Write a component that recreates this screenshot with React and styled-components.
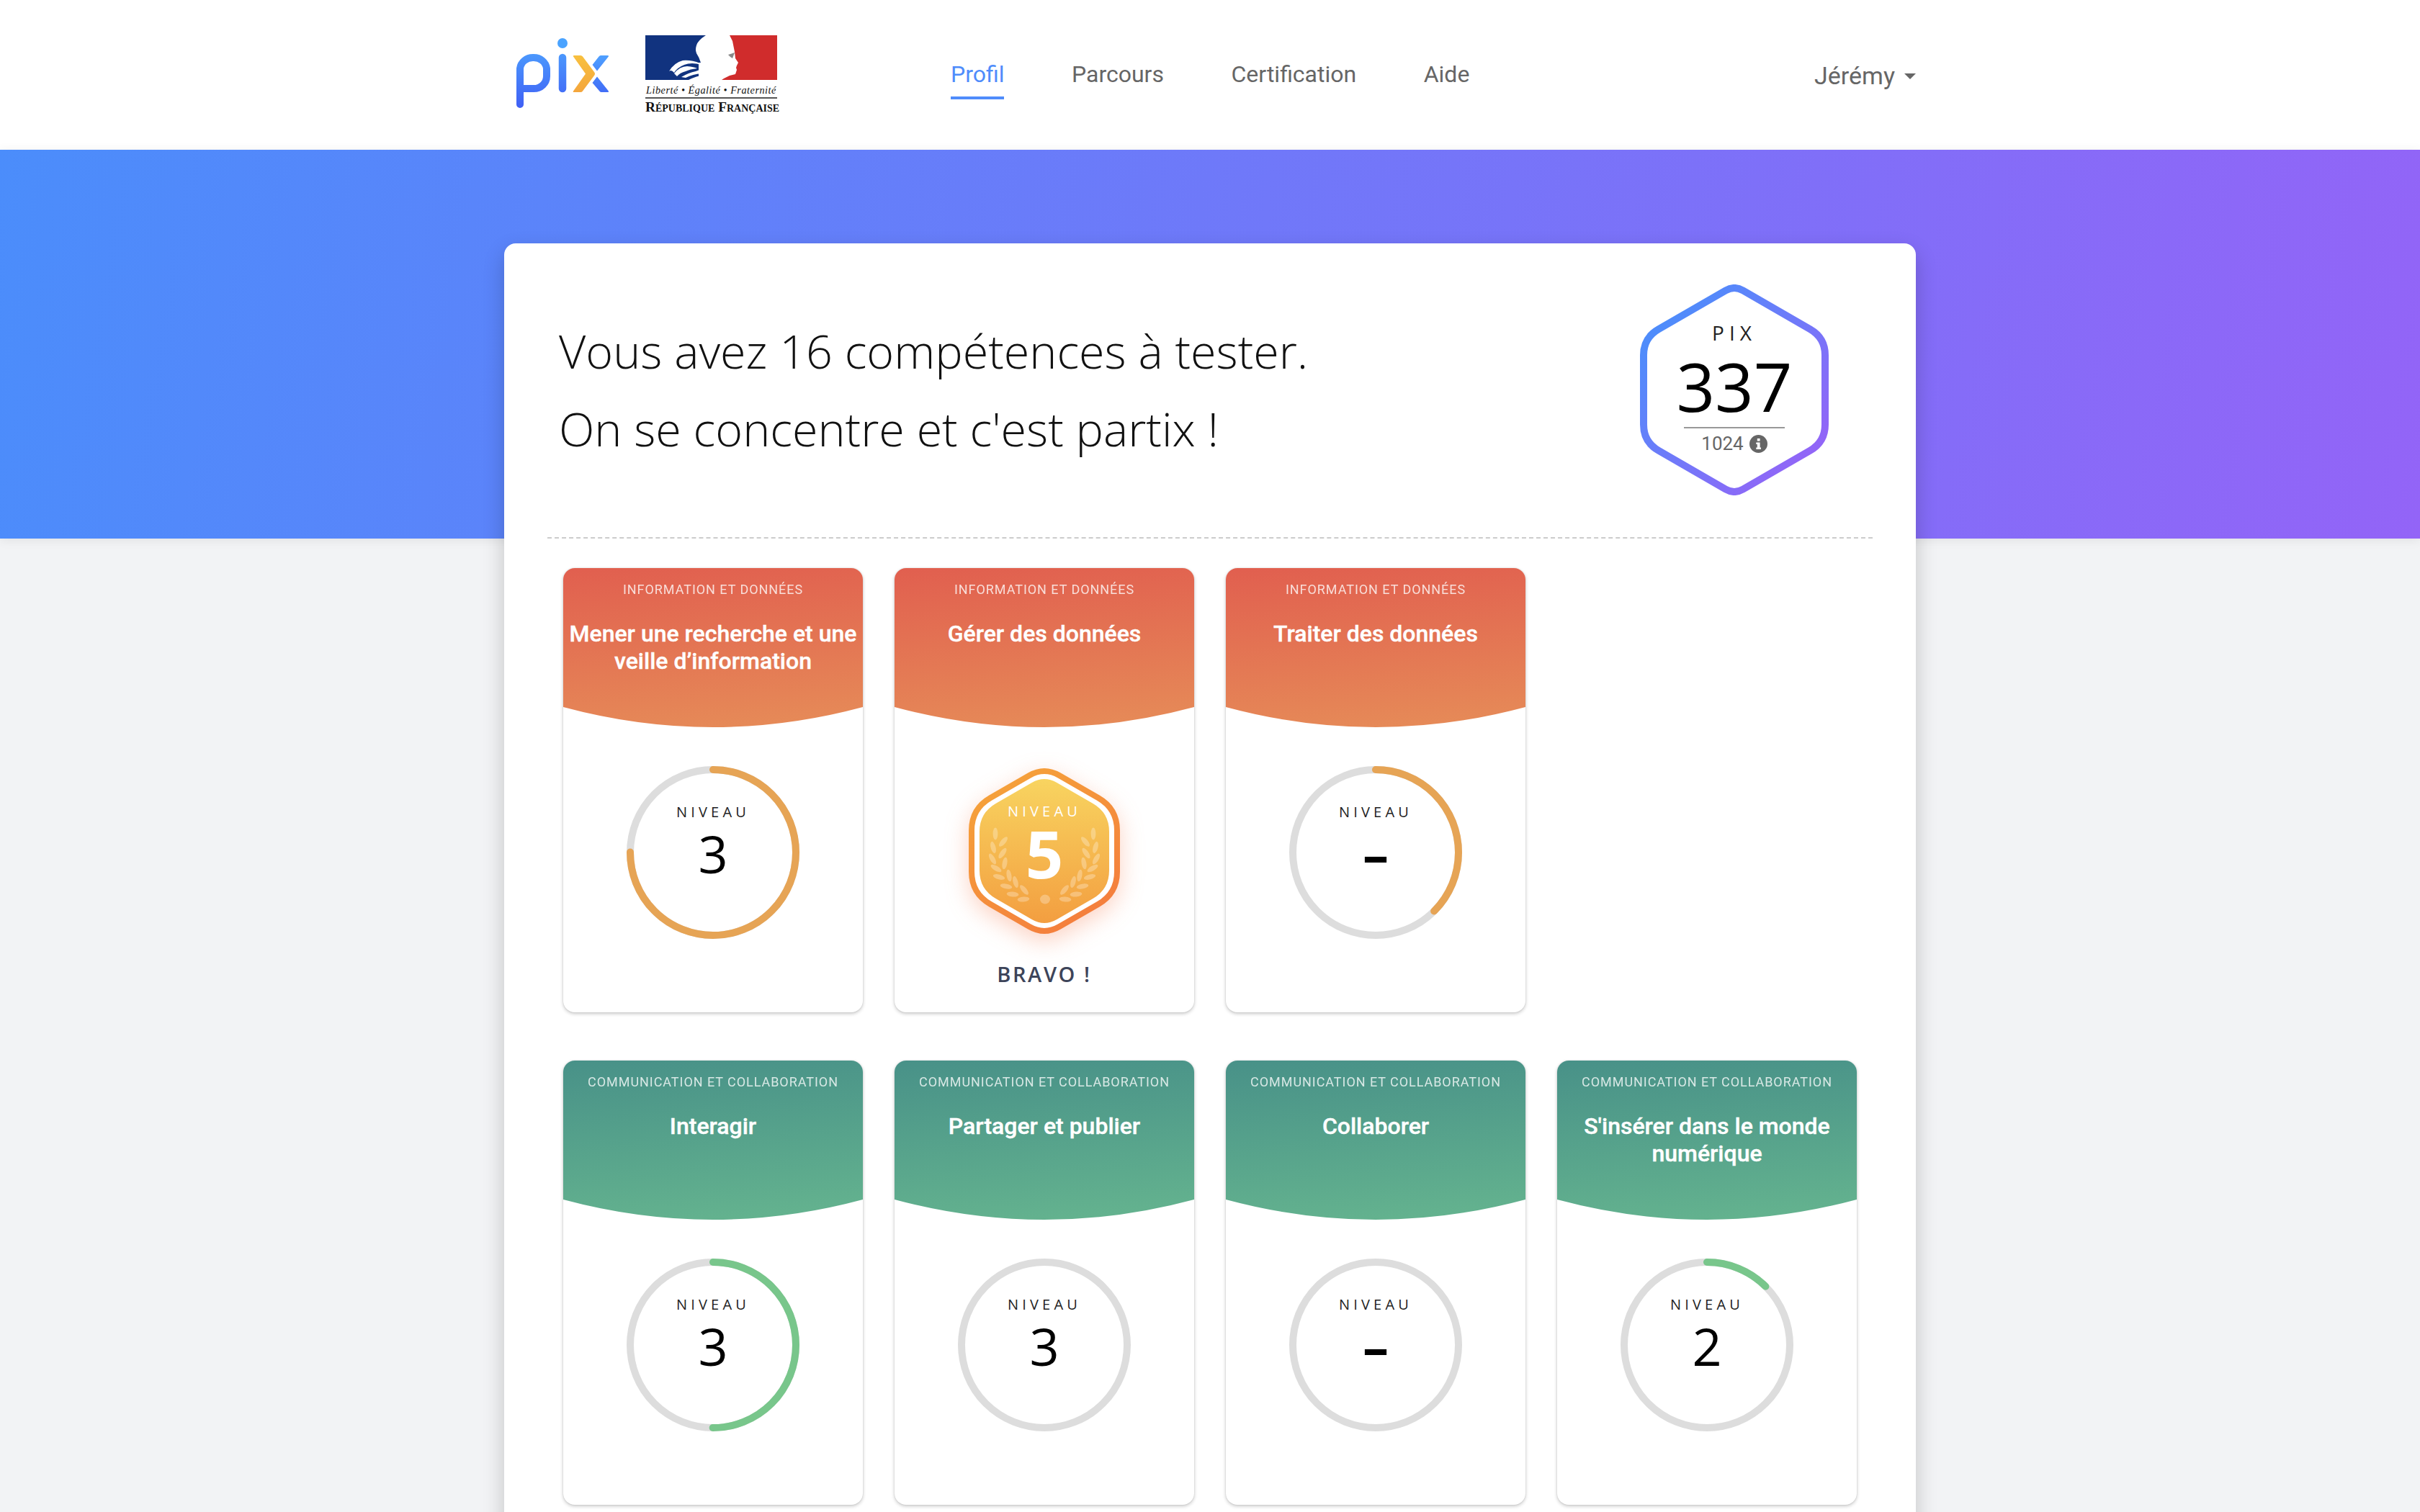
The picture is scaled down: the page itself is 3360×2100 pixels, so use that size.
import React from 'react';
import styled, { createGlobalStyle } from 'styled-components';

const Global = createGlobalStyle`
  html, body { margin: 0; padding: 0; width: 3360px; height: 2100px; overflow: hidden; background: #f2f3f5; }
  #root { width: 3360px; height: 2100px; overflow: hidden; font-family: "Roboto", "Liberation Sans", sans-serif; }
`;

const hexPath = (cx, cy, hw, hh, dTop, dSide) => {
  const rise = hw * Math.tan(Math.PI / 6);
  const pts = [
    [cx, cy - hh, dTop],
    [cx + hw, cy - hh + rise, dSide],
    [cx + hw, cy + hh - rise, dSide],
    [cx, cy + hh, dTop],
    [cx - hw, cy + hh - rise, dSide],
    [cx - hw, cy - hh + rise, dSide],
  ];
  const towards = (a, b, d) => {
    const len = Math.hypot(b[0] - a[0], b[1] - a[1]);
    return [a[0] + ((b[0] - a[0]) * d) / len, a[1] + ((b[1] - a[1]) * d) / len];
  };
  let out = '';
  pts.forEach((p, i) => {
    const prev = pts[(i + 5) % 6];
    const next = pts[(i + 1) % 6];
    const a = towards(p, prev, p[2]);
    const b = towards(p, next, p[2]);
    out += `${i === 0 ? 'M' : 'L'}${a[0].toFixed(2)} ${a[1].toFixed(2)} Q${p[0]} ${p[1]} ${b[0].toFixed(2)} ${b[1].toFixed(2)} `;
  });
  return out + 'Z';
};

const Page = styled.div`
  width: 3360px;
`;

const TopBar = styled.header`
  height: 208px;
  background: #fff;
`;

const TopBarInner = styled.div`
  width: 1960px;
  height: 100%;
  margin: 0 auto;
  display: flex;
  align-items: center;
  box-sizing: border-box;
  padding-left: 17px;
`;

const Logos = styled.div`
  display: flex;
  align-items: center;
  gap: 50px;
  width: 603px;
  margin-top: -2px;
`;

const PixMark = styled.svg`
  margin-top: -3px;
`;

const RfBlock = styled.div`
  width: 183px;
  display: flex;
  flex-direction: column;
  align-items: stretch;
`;

const RfMotto = styled.div`
  font-family: "Liberation Serif", serif;
  font-style: italic;
  font-size: 14.2px;
  line-height: 16px;
  margin-top: 6px;
  color: #111;
  white-space: nowrap;
  text-align: center;
  letter-spacing: 0.55px;
`;

const RfRule = styled.div`
  height: 2px;
  background: #555;
  margin-top: 2px;
`;

const RfName = styled.div`
  font-family: "Liberation Serif", serif;
  font-weight: 700;
  font-size: 19.3px;
  line-height: 18px;
  margin-top: 3px;
  font-variant: small-caps;
  color: #111;
  white-space: nowrap;
  text-align: center;
`;

const Nav = styled.nav`
  display: flex;
  gap: 93.5px;
  flex: 1;
  margin-top: -10px;
`;

const NavLink = styled.a`
  font-size: 32px;
  line-height: 40px;
  color: ${(p) => (p.$active ? '#4f8cfb' : '#666')};
  padding: 6px 0 11px;
  border-bottom: 4px solid ${(p) => (p.$active ? '#4f8cfb' : 'transparent')};
  margin-top: 16px;
`;

const UserMenu = styled.div`
  display: flex;
  align-items: center;
  gap: 13px;
  font-size: 34px;
  color: #666;
  margin-top: 2px;
`;

const Caret = styled.span`
  width: 0;
  height: 0;
  border-left: 8px solid transparent;
  border-right: 8px solid transparent;
  border-top: 8px solid #666;
  margin-top: 2px;
`;

const Band = styled.div`
  position: relative;
  height: 540px;
  background: linear-gradient(100deg, #4b8dfb 0%, #9364f7 100%);
  box-shadow: 0 2px 14px rgba(0, 0, 0, 0.08);
`;

const MainCard = styled.main`
  position: relative;
  width: 1960px;
  height: 2000px;
  margin: -410px auto 0;
  background: #fff;
  border-radius: 16px 16px 0 0;
  box-shadow: 0 12px 30px rgba(0, 0, 0, 0.2);
  box-sizing: border-box;
  padding: 0 60px;
`;

const Intro = styled.section`
  height: 410px;
  border-bottom: 2px dashed #ccc;
  box-sizing: border-box;
  display: flex;
  justify-content: space-between;
  padding: 57px 61px 0 16px;
`;

const IntroText = styled.div`
  font-family: "Open Sans", sans-serif;
  font-weight: 300;
  font-size: 64.6px;
  line-height: 108px;
  color: #111;
  padding-top: 38px;
`;

const ScoreStack = styled.div`
  display: grid;
  width: 262px;
  height: 293px;
  & > * { grid-area: 1 / 1; }
`;

const ScoreContent = styled.div`
  display: flex;
  flex-direction: column;
  align-items: center;
  padding-top: 51px;
`;

const ScoreLabel = styled.div`
  font-family: "Open Sans", sans-serif;
  font-size: 28px;
  line-height: 32px;
  letter-spacing: 7px;
  color: #222;
`;

const ScoreValue = styled.div`
  font-family: "Open Sans", sans-serif;
  font-size: 94px;
  line-height: 112px;
  color: #000;
  margin-top: 2px;
`;

const ScoreRule = styled.div`
  width: 140px;
  height: 2px;
  background: #999;
  margin-top: 1px;
`;

const ScoreMax = styled.div`
  display: flex;
  align-items: center;
  gap: 8px;
  font-size: 26px;
  line-height: 40px;
  color: #666;
  margin-top: 1px;
`;

const Grid = styled.div`
  display: grid;
  grid-template-columns: repeat(4, 416px);
  column-gap: 44px;
  row-gap: 67px;
  padding: 41px 22px 0;
`;

const Card = styled.article`
  height: 617px;
  border-radius: 16px;
  background: #fff;
  overflow: hidden;
  box-shadow: 0 2px 5px rgba(0, 0, 0, 0.22), 0 0 2px rgba(0, 0, 0, 0.12);
  display: flex;
  flex-direction: column;
  align-items: center;
`;

const CardHead = styled.div`
  width: 100%;
  height: 221px;
  flex: none;
  box-sizing: border-box;
  padding-top: 18px;
  text-align: center;
  color: #fff;
  background: ${(p) =>
    p.$tone === 'orange'
      ? 'linear-gradient(176deg, #e15f4f 0%, #e68c58 100%)'
      : 'linear-gradient(176deg, #489188 0%, #65b48f 100%)'};
  clip-path: path('M0 0 H416 V193 Q208 249 0 193 Z');
`;

const Tag = styled.div`
  font-size: 18px;
  line-height: 24px;
  letter-spacing: 0.95px;
  text-transform: uppercase;
  opacity: 0.78;
  white-space: nowrap;
`;

const Title = styled.h3`
  margin: 30px 0 0;
  font-size: 32px;
  font-weight: 500;
  line-height: 38px;
  padding: 0 6px;
  -webkit-text-stroke: 0.4px #fff;
`;

const CardBody = styled.div`
  flex: 1;
  display: flex;
  flex-direction: column;
  align-items: center;
  padding-top: 54px;
`;

const Dial = styled.div`
  display: grid;
  width: 240px;
  height: 240px;
  & > * { grid-area: 1 / 1; }
`;

const DialInner = styled.div`
  display: flex;
  flex-direction: column;
  align-items: center;
  padding-top: 51px;
`;

const LevelLabel = styled.div`
  font-family: "Open Sans", sans-serif;
  font-size: 20px;
  line-height: 26px;
  letter-spacing: 5.2px;
  color: ${(p) => p.$color || '#222'};
`;

const LevelValue = styled.div`
  font-family: "Open Sans", sans-serif;
  font-size: 72px;
  font-weight: ${(p) => (p.$empty ? 700 : 400)};
  line-height: 84px;
  color: #000;
  margin-top: 2px;
`;

const BadgeStack = styled.div`
  display: grid;
  width: 210px;
  height: 230px;
  margin-top: 3px;
  & > * { grid-area: 1 / 1; }
`;

const BadgeArt = styled.svg`
  overflow: visible;
  filter: drop-shadow(0 10px 16px rgba(244, 110, 60, 0.3));
`;

const BadgeInner = styled.div`
  position: relative;
  display: flex;
  flex-direction: column;
  align-items: center;
  padding-top: 47px;
`;

const BadgeValue = styled.div`
  font-family: "Open Sans", sans-serif;
  font-weight: 700;
  font-size: 92px;
  line-height: 92px;
  color: #fff;
  margin-top: -1px;
`;

const Bravo = styled.div`
  font-family: "Open Sans", sans-serif;
  font-weight: 600;
  font-size: 29px;
  line-height: 36px;
  letter-spacing: 2.6px;
  color: #3d4459;
  margin-top: 38px;
`;

const Spacer = styled.div``;

const PixLogo = () => (
  <PixMark width="129" height="97" viewBox="0 0 129 97" fill="none">
    <defs>
      <linearGradient id="pixBlue" gradientUnits="userSpaceOnUse" x1="0" y1="0" x2="0" y2="97">
        <stop offset="0" stopColor="#4fa8ff" />
        <stop offset="1" stopColor="#3f5ff5" />
      </linearGradient>
      <linearGradient id="pixYellow" gradientUnits="userSpaceOnUse" x1="0" y1="24" x2="0" y2="75">
        <stop offset="0" stopColor="#f8c03f" />
        <stop offset="1" stopColor="#f4a63c" />
      </linearGradient>
      <linearGradient id="pixBlue2" gradientUnits="userSpaceOnUse" x1="0" y1="24" x2="0" y2="76">
        <stop offset="0" stopColor="#4fa0ff" />
        <stop offset="1" stopColor="#416cf6" />
      </linearGradient>
    </defs>
    <path d="M5 92 V42 A18 17 0 0 1 23 27 H24 A18 17 0 0 1 42 42 V53 A18 17 0 0 1 24 70 H6" stroke="url(#pixBlue)" strokeWidth="10" strokeLinecap="round" strokeLinejoin="round" />
    <circle cx="64" cy="7" r="7" fill="#4aa3ff" />
    <path d="M64 27 V70" stroke="url(#pixBlue)" strokeWidth="10.5" strokeLinecap="round" />
    <path d="M80 24 H89 Q91 24 92 25.5 L108 47 Q110 49.5 108 52 L92 73.5 Q91 75 89 75 H80 Q78 75 79 73.5 L96 49.5 L79 25.5 Q78 24 80 24 Z" fill="url(#pixYellow)" />
    <path d="M117 24 H126.5 Q129 24 127.5 26 L112 45.5 L105.5 37 L114.5 25.5 Q115.5 24 117 24 Z" fill="url(#pixBlue2)" />
    <path d="M112 53.5 L127.5 73 Q129 75 126.5 75 H118 Q116.5 75 115.5 73.8 L105.5 62 Z" fill="url(#pixBlue2)" />
  </PixMark>
);

const Marianne = () => (
  <svg width="183" height="62" viewBox="0 0 183 62">
    <rect width="183" height="62" fill="#fff" />
    <path d="M0 0 H84 Q73 7 71 14 Q69 20 71 25 Q75 31 77 38 V62 H0 Z" fill="#11337f" />
    <path d="M33 50 Q40 38 52 35 Q64 34 76 39 L78 41 Q64 37 54 41 Q44 45 40 52 Q36 47 33 50 Z" fill="#fff" />
    <path d="M40 53 Q48 43 58 43 Q68 44 72 46 Q62 47 56 50 Q48 52 44 57 Z" fill="#fff" />
    <path d="M50 58 Q60 52 70 50 L78 47 V53 Q66 54 56 59 Z" fill="#fff" />
    <path d="M60 62 Q70 57 84 54 V62 Z" fill="#fff" />
    <rect x="74" y="38" width="10" height="24" fill="#fff" />
    <path d="M117 0 H183 V62 H106 L109 60 L117 56 L125 54 L127 48 L126 45 L127 42 L129 38 L125 32 L124 23 L122 13 L121 8 Z" fill="#d02c2c" />
    <path d="M115 27 L124 24 L121 32 L118 30 Z" fill="#888" />
  </svg>
);

const InfoIcon = () => (
  <svg width="25" height="25" viewBox="0 0 25 25">
    <circle cx="12.5" cy="12.5" r="12.5" fill="#666" />
    <rect x="10.8" y="5" width="3.8" height="3.6" fill="#fff" />
    <path d="M9.3 10.4 H14.6 V17.4 H16 V20 H9.3 V17.4 H10.8 V13 H9.3 Z" fill="#fff" />
  </svg>
);

const ScoreHex = () => (
  <svg width="262" height="293" viewBox="0 0 262 293" fill="none">
    <defs>
      <linearGradient id="scoreGrad" gradientUnits="userSpaceOnUse" x1="30" y1="60" x2="230" y2="240">
        <stop offset="0" stopColor="#4f8cfb" />
        <stop offset="1" stopColor="#9166f7" />
      </linearGradient>
    </defs>
    <path d={hexPath(131, 146.5, 126, 145, 14, 24)} stroke="url(#scoreGrad)" strokeWidth="10" />
  </svg>
);

const Ring = ({ progress, color }) => {
  const r = 115;
  const c = 2 * Math.PI * r;
  return (
    <svg width="240" height="240" viewBox="0 0 240 240" fill="none">
      <circle cx="120" cy="120" r={r} stroke="#ddd" strokeWidth="10" />
      {progress > 0 && (
        <circle
          cx="120"
          cy="120"
          r={r}
          stroke={color}
          strokeWidth="10"
          strokeLinecap="round"
          strokeDasharray={`${(c * progress).toFixed(2)} ${c.toFixed(2)}`}
          transform="rotate(-90 120 120)"
        />
      )}
    </svg>
  );
};

const leaves = [
  [37, 91, 0], [48, 102, 40], [34, 110, -15], [47, 118, 35], [33, 126, -30], [50, 132, 10], [38, 139, -60],
  [56, 149, -10], [42, 151, -75], [65, 158, -15], [52, 164, -80], [77, 169, -40], [61, 175, -85], [76, 182, -95],
];

const Badge = () => (
  <BadgeArt width="210" height="230" viewBox="0 0 210 230" fill="none">
    <defs>
      <linearGradient id="badgeEdge" gradientUnits="userSpaceOnUse" x1="40" y1="20" x2="170" y2="210">
        <stop offset="0" stopColor="#f5a13a" />
        <stop offset="1" stopColor="#f47e3d" />
      </linearGradient>
      <linearGradient id="badgeFill" gradientUnits="userSpaceOnUse" x1="0" y1="15" x2="0" y2="216">
        <stop offset="0" stopColor="#f8d460" />
        <stop offset="1" stopColor="#f39e40" />
      </linearGradient>
    </defs>
    <path d={hexPath(105, 115, 101, 117, 24, 30)} fill="#fff" stroke="url(#badgeEdge)" strokeWidth="8" />
    <path d={hexPath(105, 115, 90, 105, 20, 26)} fill="url(#badgeFill)" />
    {leaves.map(([x, y, a]) => (
      <g key={`${x}-${y}`} fill="#fff" fillOpacity="0.28">
        <ellipse cx={x} cy={y} rx="3.4" ry="8.4" transform={`rotate(${a} ${x} ${y})`} />
        <ellipse cx={210 - x} cy={y} rx="3.4" ry="8.4" transform={`rotate(${-a} ${210 - x} ${y})`} />
      </g>
    ))}
    <ellipse cx="106" cy="182" rx="7" ry="6.5" fill="#fff" fillOpacity="0.28" />
  </BadgeArt>
);

const info = 'Information et données';
const comm = 'Communication et collaboration';

const rows = [
  { tag: info, tone: 'orange', title: 'Mener une recherche et une veille d’information', level: '3', progress: 0.75 },
  { tag: info, tone: 'orange', title: 'Gérer des données', badge: true },
  { tag: info, tone: 'orange', title: 'Traiter des données', level: '–', progress: 0.375 },
  null,
  { tag: comm, tone: 'green', title: 'Interagir', level: '3', progress: 0.5 },
  { tag: comm, tone: 'green', title: 'Partager et publier', level: '3', progress: 0 },
  { tag: comm, tone: 'green', title: 'Collaborer', level: '–', progress: 0 },
  { tag: comm, tone: 'green', title: 'S\'insérer dans le monde numérique', level: '2', progress: 0.125 },
];

const CompetenceCard = ({ tag, tone, title, level, progress, badge }) => (
  <Card>
    <CardHead $tone={tone}>
      <Tag>{tag}</Tag>
      <Title>{title}</Title>
    </CardHead>
    <CardBody>
      {badge ? (
        <>
          <BadgeStack>
            <Badge />
            <BadgeInner>
              <LevelLabel $color="#fff">NIVEAU</LevelLabel>
              <BadgeValue>5</BadgeValue>
            </BadgeInner>
          </BadgeStack>
          <Bravo>BRAVO !</Bravo>
        </>
      ) : (
        <Dial>
          <Ring progress={progress} color={tone === 'orange' ? '#e6a455' : '#78c68b'} />
          <DialInner>
            <LevelLabel>NIVEAU</LevelLabel>
            <LevelValue $empty={level === '–'}>{level}</LevelValue>
          </DialInner>
        </Dial>
      )}
    </CardBody>
  </Card>
);

export default function App() {
  return (
    <Page>
      <Global />
      <TopBar>
        <TopBarInner>
          <Logos>
            <PixLogo />
            <RfBlock>
              <Marianne />
              <RfMotto>Liberté • Égalité • Fraternité</RfMotto>
              <RfRule />
              <RfName>République Française</RfName>
            </RfBlock>
          </Logos>
          <Nav>
            <NavLink $active>Profil</NavLink>
            <NavLink>Parcours</NavLink>
            <NavLink>Certification</NavLink>
            <NavLink>Aide</NavLink>
          </Nav>
          <UserMenu>
            Jérémy
            <Caret />
          </UserMenu>
        </TopBarInner>
      </TopBar>
      <Band />
      <MainCard>
        <Intro>
          <IntroText>
            Vous avez 16 compétences à tester.
            <br />
            On se concentre et c'est partix !
          </IntroText>
          <ScoreStack>
            <ScoreHex />
            <ScoreContent>
              <ScoreLabel>PIX</ScoreLabel>
              <ScoreValue>337</ScoreValue>
              <ScoreRule />
              <ScoreMax>
                1024
                <InfoIcon />
              </ScoreMax>
            </ScoreContent>
          </ScoreStack>
        </Intro>
        <Grid>
          {rows.map((r, i) => (r ? <CompetenceCard key={i} {...r} /> : <Spacer key={i} />))}
        </Grid>
      </MainCard>
    </Page>
  );
}
